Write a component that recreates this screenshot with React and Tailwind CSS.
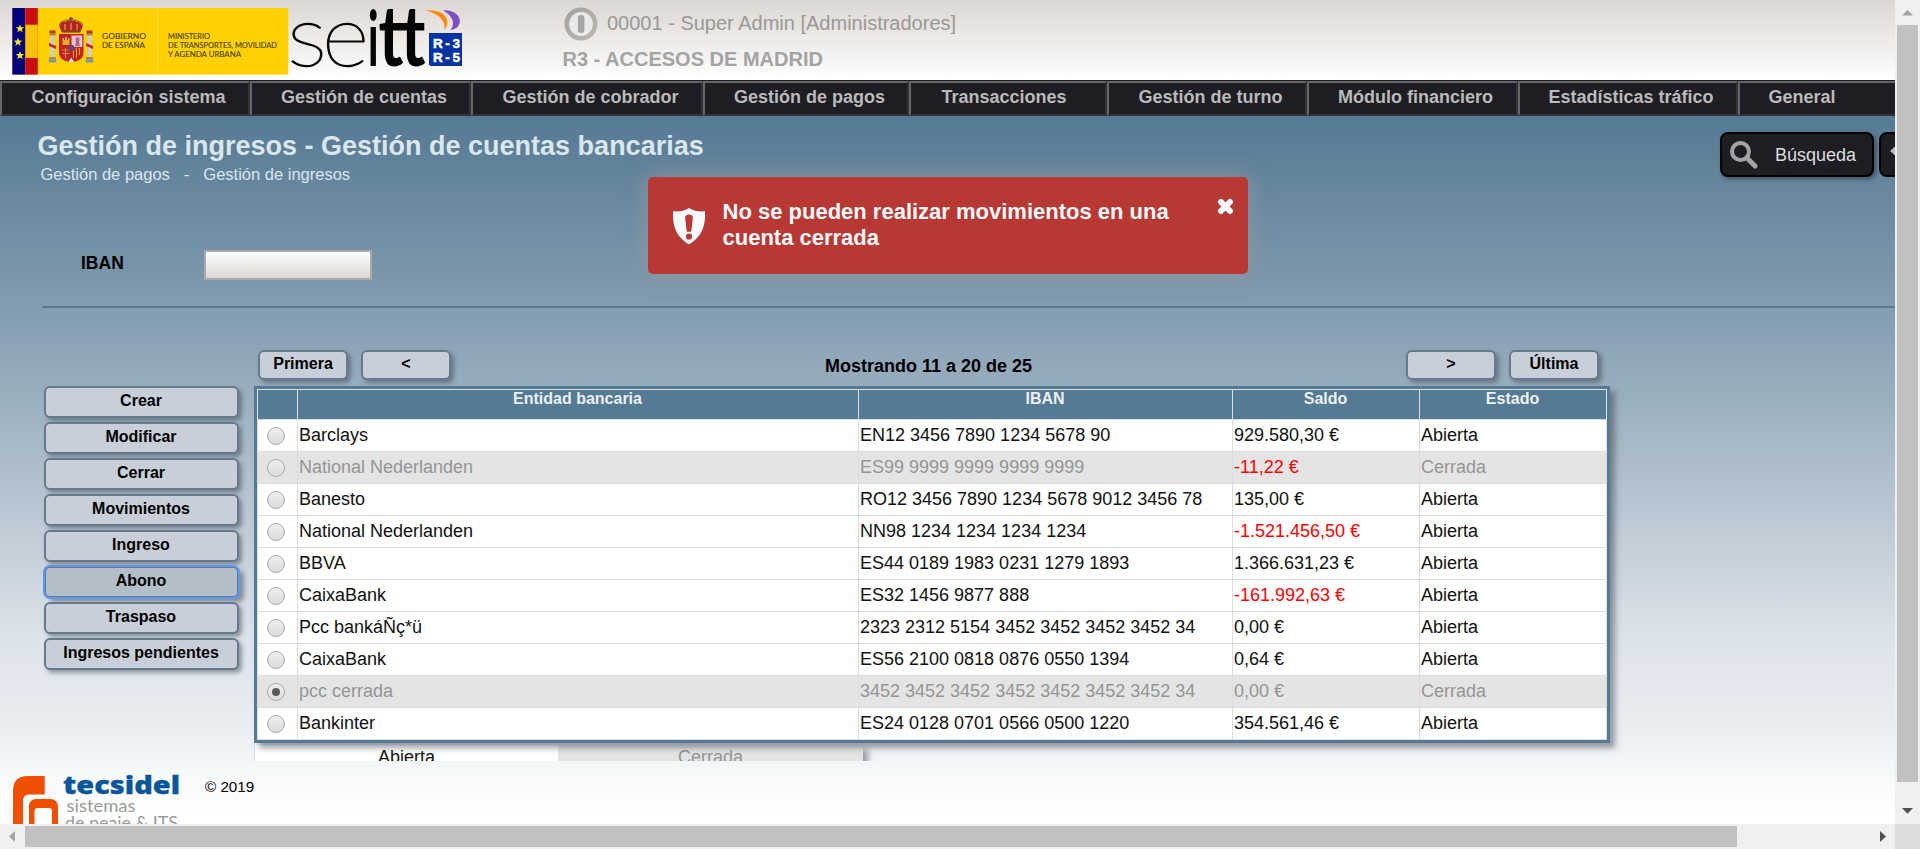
import React from "react";

const menu = [
  ["Configuración sistema", "w-[250px] pl-[7px]"],
  ["Gestión de cuentas", "w-[221px] pl-[7px]"],
  ["Gestión de cobrador", "w-[232px] pl-[7px]"],
  ["Gestión de pagos", "w-[206px] pl-[7px]"],
  ["Transacciones", "w-[198px] pr-[8px]"],
  ["Gestión de turno", "w-[200px] pl-[7px]"],
  ["Módulo financiero", "w-[211px] pl-[6px]"],
  ["Estadísticas tráfico", "w-[220px] pl-[6px]"],
  ["General", "w-[300px] -mr-[143px] pr-[172px]"],
];

const actions = ["Crear", "Modificar", "Cerrar", "Movimientos", "Ingreso", "Abono", "Traspaso", "Ingresos pendientes"];

const accounts = [
  ["Barclays", "EN12 3456 7890 1234 5678 90", "929.580,30 €", "Abierta"],
  ["National Nederlanden", "ES99 9999 9999 9999 9999", "-11,22 €", "Cerrada"],
  ["Banesto", "RO12 3456 7890 1234 5678 9012 3456 78", "135,00 €", "Abierta"],
  ["National Nederlanden", "NN98 1234 1234 1234 1234", "-1.521.456,50 €", "Abierta"],
  ["BBVA", "ES44 0189 1983 0231 1279 1893", "1.366.631,23 €", "Abierta"],
  ["CaixaBank", "ES32 1456 9877 888", "-161.992,63 €", "Abierta"],
  ["Pcc bankáÑç*ü", "2323 2312 5154 3452 3452 3452 3452 34", "0,00 €", "Abierta"],
  ["CaixaBank", "ES56 2100 0818 0876 0550 1394", "0,64 €", "Abierta"],
  ["pcc cerrada", "3452 3452 3452 3452 3452 3452 3452 34", "0,00 €", "Cerrada"],
  ["Bankinter", "ES24 0128 0701 0566 0500 1220", "354.561,46 €", "Abierta"],
];

const SELECTED = 8;
const COLS = "grid grid-cols-[40px_561px_374px_187px_188px]";

function Pillar({ x }) {
  return (
    <g>
      <rect x={x} y="35" width="4" height="24" fill="#c9ccd0" />
      <rect x={x - 1.2} y="33" width="6.4" height="2.4" fill="#b08a2a" />
      <rect x={x - 1} y="30.5" width="6" height="2.6" fill="#c3272b" />
      <path d={`M${x - 1.5} 43 L${x + 5.5} 46 V49 L${x - 1.5} 46Z`} fill="#c3272b" />
      <rect x={x - 1.5} y="57" width="7" height="2.5" fill="#b08a2a" />
      <rect x={x - 1.8} y="59.5" width="7.6" height="3" fill="#7b93ad" />
    </g>
  );
}

function HeaderLogo() {
  return (
    <svg width="480" height="80" viewBox="0 0 480 80" className="block shrink-0">
      <rect x="12.3" y="8" width="276" height="66.6" fill="#ffd105" />
      <rect x="12.3" y="8" width="13" height="66.6" fill="#03047b" />
      <rect x="25.3" y="8" width="12.5" height="66.6" fill="#c90d15" />
      <rect x="25.3" y="24.7" width="12.5" height="33.3" fill="#ffc20a" />
      {[[20, 28.6], [18, 42], [20, 55.4]].map(([x, y]) => (
        <path
          key={y}
          transform={`translate(${x} ${y})`}
          d="M0-4.4 1.1-1.4 4.3-1.3 1.8.7 2.7 3.7 0 2-2.7 3.7-1.8.7-4.3-1.3-1.1-1.4Z"
          fill="#f6e42b"
        />
      ))}
      <path d="M157.500 8v66.600" stroke="#ffda3a" strokeWidth="1" />
      <Pillar x={50.5} />
      <Pillar x={87.5} />
      <path d="M60.500 29c-4-7 3-9 5-7 2-3 9-3 11 0 3-2 9 1 5 7l-1.500 3.500h-18z" fill="#b5212a" />
      <path d="M59.500 25c1-4 6-5 11-5s10 1 11.500 5" fill="none" stroke="#a97a1c" strokeWidth="1.600" />
      <path d="M71 17v5M69 18.700h4M61.500 31.500h19" stroke="#7c4a1c" strokeWidth="1.600" />
      <path d="M65 24v6M71 23v7M77 24v6" stroke="#e0a52a" strokeWidth="1.200" />
      <path d="M59 34h24.500v18.500c0 6-5.500 9.500-12.200 9.500S59 58.500 59 52.500z" fill="#c4202b" />
      <rect x="71.500" y="35.500" width="10.800" height="11.500" fill="#e6c5cf" />
      <path d="M77 37c3 0 3 3 2 5l1 4h-5l1-4c-1-2-1-4 1-5z" fill="#b7648d" />
      <path d="M62.500 45v-7h1.500v2h1v-3h2v3h1v-2h1.500v7z" fill="#e3ae2d" />
      <path d="M73.500 48v10M76.500 48v9.500M79.500 48v7" stroke="#e3ae2d" strokeWidth="1.100" />
      <path d="M61.500 50h8M62 53.500h7.500M65.500 48v10" stroke="#d99a2a" strokeWidth="0.900" />
      <circle cx="71.300" cy="48" r="2.800" fill="#2f5b9e" stroke="#c4202b" />
      <path d="M68.500 62l2.800-4.500 2.800 4.500z" fill="#ece3d3" />
      <g fontFamily="Lato, sans-serif" fontSize="8.4" fill="#4c4408" stroke="#4c4408" strokeWidth="0.15">
        <text x="102" y="39.2" textLength="44" lengthAdjust="spacingAndGlyphs">GOBIERNO</text>
        <text x="102" y="48" textLength="43" lengthAdjust="spacingAndGlyphs">DE ESPAÑA</text>
        <text x="168" y="39.2" textLength="42" lengthAdjust="spacingAndGlyphs">MINISTERIO</text>
        <text x="168" y="48" textLength="109" lengthAdjust="spacingAndGlyphs">DE TRANSPORTES, MOVILIDAD</text>
        <text x="168" y="56.8" textLength="73" lengthAdjust="spacingAndGlyphs">Y AGENDA URBANA</text>
      </g>
      <g fontFamily="Lato, sans-serif" fill="#050505">
        <g fontSize="87" fontWeight="100" stroke="#050505" strokeWidth="1.300">
          <text x="287" y="65.500" textLength="40" lengthAdjust="spacingAndGlyphs">s</text>
          <text x="322" y="65.500" textLength="47" lengthAdjust="spacingAndGlyphs">e</text>
        </g>
        <text x="367.800" y="66" fontSize="76" fontWeight="700" textLength="11" lengthAdjust="spacingAndGlyphs">i</text>
        <text x="378.500" y="66" fontSize="85" fontWeight="700" textLength="47" lengthAdjust="spacingAndGlyphs">tt</text>
      </g>
      <path d="M425.500 10.300c12-.800 21 3 21.800 11 .300 3.500-1 6.500-3 8.700 1.500-9-5-16-18.800-19.700z" fill="#ff8a0c" />
      <path d="M443 10.300c9-.500 16 3.500 16.800 10 .500 5-3 9-9.300 9.700 5-6 3-13.500-7.500-19.700z" fill="#7d4fc4" />
      <path d="M429 33h33v33h-31.500l-1.500-1.500z" fill="#0633a1" />
      <g fontFamily="Liberation Sans, sans-serif" fontSize="13.500" fontWeight="700" fill="#fff" stroke="#fff" strokeWidth="0.500">
        <text x="433" y="47.800" textLength="27" lengthAdjust="spacing">R-3</text>
        <text x="433" y="61.600" textLength="27" lengthAdjust="spacing">R-5</text>
      </g>
    </svg>
  );
}

function Header() {
  return (
    <header className="flex h-20 shrink-0 bg-linear-to-b from-[#dbd6d1] to-white">
      <HeaderLogo />
      <div className="pt-[7px] pl-[82px] text-[20px] leading-[23px]">
        <div className="flex h-[34px] items-center gap-[9px] text-[#999]">
          <svg width="36" height="36" viewBox="0 0 36 36" className="block">
            <defs>
              <linearGradient id="ring" x1="0" y1="0" x2="1" y2="1">
                <stop offset="0" stopColor="#a3a19f" />
                <stop offset="1" stopColor="#bbb9b7" />
              </linearGradient>
            </defs>
            <circle cx="19" cy="18" r="14.200" fill="#eceae8" stroke="url(#ring)" strokeWidth="4.600" />
            <rect x="15.800" y="9" width="6.600" height="18" rx="3.300" fill="#a8a6a5" />
          </svg>
          <span className="-mt-[1px] whitespace-nowrap">00001 - Super Admin [Administradores]</span>
        </div>
        <div className="mt-[7px] ml-[0.500px] font-bold whitespace-nowrap text-[#a3a3a3]">R3 - ACCESOS DE MADRID</div>
      </div>
    </header>
  );
}

function Menu() {
  return (
    <nav className="flex h-9 w-full shrink-0 overflow-hidden border-t border-[#1e1d23] bg-[#1e1d23]">
      {menu.map(([label, box]) => (
        <div
          key={label}
          className={`${box} flex h-[35px] shrink-0 items-center justify-center border-2 border-t-[#666] border-r-[#333] border-b-[#333] border-l-[#666] pb-[3px] text-[18px] font-bold whitespace-nowrap text-[#bababa]`}
        >
          {label}
        </div>
      ))}
    </nav>
  );
}

function Alert() {
  return (
    <div className="absolute top-[61px] left-[648px] flex h-[97px] w-[600px] rounded-[5px] bg-[#b83833] text-[#f7f9fc] shadow-[0_0_20px_1px_rgba(153,153,153,0.75)]">
      <svg width="34" height="38" viewBox="0 0 34 38" className="mt-[30px] ml-[24px] block shrink-0">
        <path d="M17 1c4.500 3 10 3.800 16 3.300.8 15-3.500 26-16 33.200C4.500 30.300.2 19.300 1 4.300 7 4.800 12.500 4 17 1z" fill="currentColor" />
        <path d="M17 7.500c2.800 0 4 1.300 3.800 4l-1.600 13.300h-4.400L13.200 11.500c-.200-2.700 1-4 3.800-4z" fill="#b83833" />
        <circle cx="17" cy="29.500" r="3.100" fill="#b83833" />
      </svg>
      <p className="mt-[22px] ml-[16.500px] w-[460px] shrink-0 text-[22px] leading-[26.400px] font-bold">
        No se pueden realizar movimientos en una cuenta cerrada
      </p>
      <svg width="17" height="17" viewBox="0 0 17 17" className="mt-[21px] ml-[34px] block">
        <path d="M4 4l9 9M13 4l-9 9" stroke="currentColor" strokeWidth="6" strokeLinecap="round" />
      </svg>
    </div>
  );
}

const boxButton =
  "flex items-center justify-center rounded-[6px] border-2 border-[#66798d] bg-[#c8cfd8] text-[16px] font-bold text-black shadow-[3px_3px_4px_rgba(60,70,80,0.5)]";

function PagerButton({ children }) {
  return <button className={`${boxButton} h-[30px] w-[90px] pb-[2px]`}>{children}</button>;
}

function Radio({ checked }) {
  return (
    <span className="flex size-[18px] items-center justify-center rounded-full border border-[#aaa] bg-linear-to-b from-[#eee] to-[#dcdcdc]">
      {checked && <span className="size-2 rounded-full bg-[#5a5a5a]" />}
    </span>
  );
}

function Table() {
  return (
    <div className="relative z-10 w-[1356px] border-3 border-[#557a94] shadow-[5px_5px_6px_rgba(60,65,80,0.5)]">
      <div className={`${COLS} h-[30px] bg-[#557a94] text-[16px] leading-[18px] font-bold text-[#eceff3]`}>
        {["", "Entidad bancaria", "IBAN", "Saldo", "Estado"].map((h, i) => (
          <div key={i} className={`border-t border-l border-[#dcdee0] pr-[1px] text-center ${i === 4 ? "border-r" : ""}`}>
            {h}
          </div>
        ))}
      </div>
      {accounts.map((row, r) => {
        const closed = row[3] === "Cerrada";
        return (
          <div
            key={r}
            className={`${COLS} text-[18px] ${r === 9 ? "h-[33px] border-b border-[#dcdcde]" : "h-8"} ${closed ? "bg-[#e4e4e4] text-[#959595]" : "bg-white text-[#111]"}`}
          >
            <div className="flex items-center border-t border-l border-[#dcdcde] pl-[9px]">
              <Radio checked={r === SELECTED} />
            </div>
            {row.map((cell, c) => (
              <div
                key={c}
                className={`flex items-center border-t border-l border-[#dcdcde] pb-[1px] pl-[1px] whitespace-nowrap ${c === 3 ? "border-r" : ""} ${cell.startsWith("-") ? "text-[#f00]" : ""}`}
              >
                {cell}
              </div>
            ))}
          </div>
        );
      })}
    </div>
  );
}

function Content() {
  return (
    <main className="relative h-[645px] shrink-0 overflow-hidden">
      <div className="flex h-[190px] items-start justify-between">
        <div className="pt-[13px] pl-[37.500px]">
          <h1 className="text-[27px] leading-[34px] font-bold whitespace-nowrap text-[#dbe6ed]">
            Gestión de ingresos - Gestión de cuentas bancarias
          </h1>
          <div className="mt-[1px] ml-[3px] flex text-[16.500px] leading-[20px] whitespace-nowrap text-[#dbe6ed]">
            <span>Gestión de pagos</span>
            <span className="mx-[14px]">-</span>
            <span>Gestión de ingresos</span>
          </div>
          <label className="mt-[66px] ml-[43.500px] flex h-[30px] items-center text-[17.500px] font-bold text-black">
            <span className="w-[123px] pb-[3px]">IBAN</span>
            <span className="h-[30px] w-[168px] border-2 border-[#a9a9a9] bg-linear-to-b from-white to-[#dbd6d1]" />
          </label>
        </div>
        <div className="mt-4 -mr-[139px] flex gap-[5px]">
          <button className="flex h-[45px] w-[154px] items-center rounded-lg border-2 border-black bg-[#1e1d23] pl-[8px] text-[18px] text-[#ddd] shadow-[2px_2px_4px_rgba(0,0,0,0.4)]">
            <svg width="28" height="28" viewBox="0 0 28 28" className="mr-[17px] block">
              <circle cx="10.500" cy="10.500" r="8.500" fill="none" stroke="#a3a3a3" strokeWidth="4" />
              <path d="M17 17l8 8" stroke="#a3a3a3" strokeWidth="5" strokeLinecap="round" />
            </svg>
            <span className="pt-[2px]">Búsqueda</span>
          </button>
          <button className="flex h-[45px] w-[155px] items-center rounded-lg border-2 border-black bg-[#1e1d23] pl-[9px] text-[#bbb]">
            <svg width="20" height="20" viewBox="0 0 20 20" className="-mt-2 block">
              <path d="M0 10l9-8v5h8v6H9v5z" fill="currentColor" />
            </svg>
          </button>
        </div>
      </div>
      <div className="ml-[42px] h-[2px] bg-[#557a94]" />
      <div className="mt-[42px] flex">
        <div className="mt-9 ml-[44px] flex w-[195px] shrink-0 flex-col gap-1">
          {actions.map((label) =>
            label === "Abono" ? (
              <button
                key={label}
                className="flex h-8 items-center justify-center rounded-[6px] border-2 border-[#66798d] bg-[#b4bec9] pr-[1px] pb-[2px] text-[16px] font-bold text-black shadow-[5px_4px_4px_rgba(60,70,80,0.5)] outline-2 -outline-offset-1 outline-[#5d97f5]"
              >
                {label}
              </button>
            ) : (
              <button key={label} className={`${boxButton} h-8 pr-[1px] pb-[2px]`}>
                {label}
              </button>
            ),
          )}
        </div>
        <div className="ml-[15px] w-[1356px] shrink-0">
          <div className="flex h-9 items-start justify-between pr-[11px] pl-[4px]">
            <div className="flex gap-[13px]">
              <PagerButton>Primera</PagerButton>
              <PagerButton>&lt;</PagerButton>
            </div>
            <div className="pt-[5px] text-[18px] leading-[22px] font-bold text-black">Mostrando 11 a 20 de 25</div>
            <div className="flex gap-[13px]">
              <PagerButton>&gt;</PagerButton>
              <PagerButton>Última</PagerButton>
            </div>
          </div>
          <Table />
          <div className="mt-[2px] flex h-[30px] w-[609px] text-center text-[18px] leading-[24px] shadow-[5px_5px_6px_rgba(60,65,80,0.5)]">
            <div className="w-[304px] border-l border-[#dcdcde] bg-white text-[#111]">Abierta</div>
            <div className="w-[305px] bg-[#e4e4e4] text-[#959595]">Cerrada</div>
          </div>
        </div>
      </div>
      <Alert />
    </main>
  );
}

function Footer() {
  return (
    <footer className="flex h-[63px] shrink-0 overflow-hidden">
      <svg width="205" height="63" viewBox="0 0 205 63" className="block shrink-0">
        <path d="M44.700 15H28C18 15 13 20 13 30v33h10V40c0-4 2-6.500 7-6.500h14.700z" fill="#f04e00" />
        <path d="M29 63V45c0-4 3-7 7-7h14c5 0 8 3 8 8v17h-6V50c0-2-1-3-3-3H38c-2.500 0-3.500 1-3.500 3.500V63z" fill="#f04e00" />
        <text x="63" y="33" fontFamily="Open Sans, sans-serif" fontWeight="800" fontSize="25" fill="#0a5699" stroke="#0a5699" strokeWidth="0.300" textLength="117" lengthAdjust="spacingAndGlyphs">tecsidel</text>
        <g fontFamily="Lato, sans-serif" fontSize="17" fill="#9a9a9a">
          <text x="66.500" y="51" textLength="69" lengthAdjust="spacingAndGlyphs">sistemas</text>
          <text x="65" y="68" textLength="113" lengthAdjust="spacingAndGlyphs">de peaje &amp; ITS</text>
        </g>
      </svg>
      <span className="pt-[16px] text-[15.200px] leading-[20px] text-black">© 2019</span>
    </footer>
  );
}

function VerticalBar() {
  return (
    <div className="flex w-[25px] shrink-0 flex-col items-center bg-[#f0f0f0]">
      <svg width="25" height="25" viewBox="0 0 25 25" className="block shrink-0">
        <path d="M7 15.500h11L12.500 10z" fill="#a3a3a3" />
      </svg>
      <div className="h-[757px] w-[21px] bg-[#c1c1c1]" />
      <svg width="25" height="42" viewBox="0 0 25 42" className="block shrink-0">
        <path d="M7 26h11l-5.500 5.800z" fill="#505050" />
      </svg>
      <div className="h-[25px] w-full bg-[#dcdcdc]" />
    </div>
  );
}

function HorizontalBar() {
  return (
    <div className="flex h-[25px] shrink-0 items-center bg-[#f0f0f0]">
      <svg width="25" height="25" viewBox="0 0 25 25" className="block shrink-0">
        <path d="M15 7v11L9 12.500z" fill="#a3a3a3" />
      </svg>
      <div className="h-[21px] w-[1712px] bg-[#c1c1c1]" />
      <svg width="158" height="25" viewBox="0 0 158 25" className="block shrink-0">
        <path d="M143 7v11l6-5.500z" fill="#505050" />
      </svg>
    </div>
  );
}

export default function App() {
  return (
    <div className="flex h-[849px] w-[1920px] overflow-hidden bg-white font-['Liberation_Sans',Arial,sans-serif]">
      <div className="flex w-[1895px] shrink-0 flex-col overflow-hidden">
        <Header />
        <Menu />
        <div className="flex h-[708px] shrink-0 flex-col bg-[linear-gradient(to_bottom,#557a94_0px,#839cb0_194px,#8ea5b9_230px,#9bb0be_284px,#dde3ea_524px,#eaeef2_612px,#f7f9fa_660px,#ffffff_695px)]">
          <Content />
          <Footer />
        </div>
        <HorizontalBar />
      </div>
      <VerticalBar />
    </div>
  );
}
